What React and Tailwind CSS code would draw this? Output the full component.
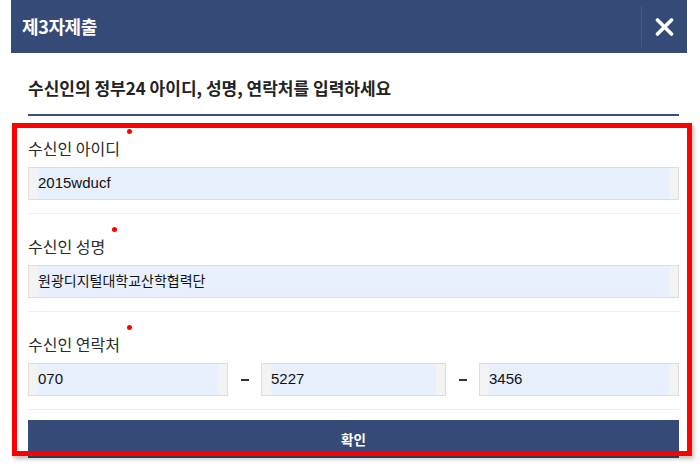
import React from "react";

const KR = { fontFamily: '"Noto Sans CJK KR", "Noto Sans", sans-serif' };
const MIX = { fontFamily: '"Liberation Sans", "Noto Sans CJK KR", sans-serif' };

function Box({ children, className = "", textClass = "text-[15px]" }) {
  return (
    <div className={`h-[33px] border border-[#dddddd] bg-[#f3f3f3] px-[9px] flex ${className}`}>
      <div className={`flex-1 bg-[#e8f0fe] flex items-center text-[#111] ${textClass}`} style={MIX}>
        {children}
      </div>
    </div>
  );
}

function Label({ children }) {
  return (
    <div className="h-[22px] flex items-center">
      <span className="relative text-[16px] text-[#2b2b2b] leading-[22px]" style={KR}>
        {children}
        <span className="absolute left-[calc(100%+7px)] top-[-8px] w-[5px] h-[5px] rounded-full bg-[#ff0000]" />
      </span>
    </div>
  );
}

export default function App() {
  return (
    <div className="relative w-[700px] h-[467px] bg-white overflow-hidden">
      <div className="ml-[11px] w-[676px] bg-white">
        <div className="h-[53px] bg-[#354a76] flex items-center pl-[11px]">
          <span className="text-white text-[18px] font-bold tracking-[-0.4px]" style={KR}>제3자제출</span>
          <div className="ml-auto h-[41px] w-px bg-[#46598a]" />
          <div className="w-[45px] flex items-center justify-center">
            <svg width="19" height="18" viewBox="0 0 19 18">
              <path d="M2.5 2 L16.5 16 M16.5 2 L2.5 16" stroke="white" strokeWidth="3.6" strokeLinecap="round" />
            </svg>
          </div>
        </div>
        <div className="pl-[17px] pr-[8px]">
          <div className="pt-[23px] pb-[14px] border-b-2 border-[#3b4f7c]">
            <div className="leading-[24px] text-[17px] font-bold text-[#222]" style={KR}>
              수신인의 정부24 아이디, 성명, 연락처를 입력하세요
            </div>
          </div>
          <div className="pt-[21px] pb-[13px] border-b border-[#eeeeee]">
            <Label>수신인 아이디</Label>
            <Box className="mt-[8px]">2015wducf</Box>
          </div>
          <div className="pt-[21px] pb-[13px] border-b border-[#eeeeee]">
            <Label>수신인 성명</Label>
            <Box className="mt-[8px]" textClass="text-[14px]">원광디지털대학교산학협력단</Box>
          </div>
          <div className="pt-[21px] pb-[13px] border-b border-[#eeeeee]">
            <Label>수신인 연락처</Label>
            <div className="mt-[8px] flex items-center">
              <Box className="w-[200px]">070</Box>
              <div className="w-[33px] flex justify-center">
                <div className="w-[8px] h-[2px] bg-[#333]" />
              </div>
              <Box className="w-[185px]">5227</Box>
              <div className="w-[33px] flex justify-center">
                <div className="w-[8px] h-[2px] bg-[#333]" />
              </div>
              <Box className="flex-1">3456</Box>
            </div>
          </div>
          <div className="mt-[10px] h-[38px] bg-[#354a76] flex items-center justify-center">
            <span className="text-white text-[13.5px] font-bold" style={KR}>확인</span>
          </div>
        </div>
      </div>
      <div className="absolute left-[12px] top-[123px] w-[680px] h-[333px] border-[5px] border-[#ff0000] shadow-[2px_3px_4px_rgba(0,0,0,0.25)]" />
    </div>
  );
}
